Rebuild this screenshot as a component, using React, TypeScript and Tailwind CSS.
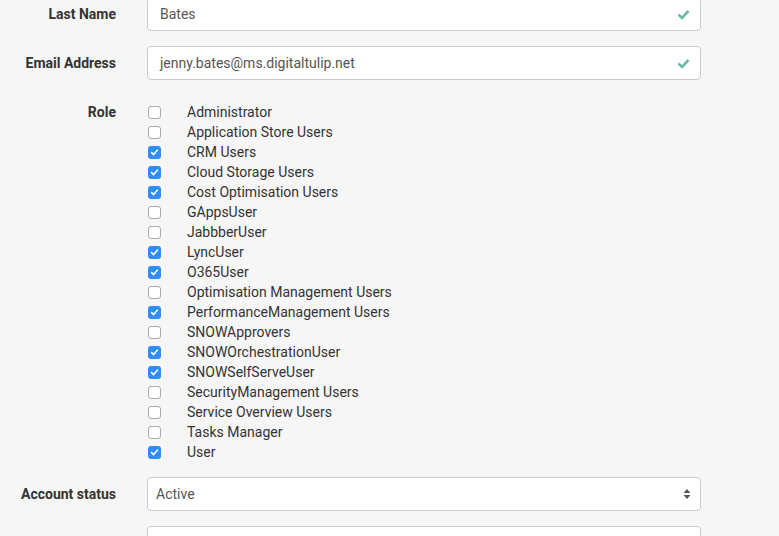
import React from "react";

const roles: [string, boolean][] = [
  ["Administrator", false],
  ["Application Store Users", false],
  ["CRM Users", true],
  ["Cloud Storage Users", true],
  ["Cost Optimisation Users", true],
  ["GAppsUser", false],
  ["JabbberUser", false],
  ["LyncUser", true],
  ["O365User", true],
  ["Optimisation Management Users", false],
  ["PerformanceManagement Users", true],
  ["SNOWApprovers", false],
  ["SNOWOrchestrationUser", true],
  ["SNOWSelfServeUser", true],
  ["SecurityManagement Users", false],
  ["Service Overview Users", false],
  ["Tasks Manager", false],
  ["User", true],
];

function Check() {
  return (
    <svg width="13" height="11" viewBox="0 0 13 11" className="shrink-0">
      <path d="M1.5 5.5 L5 9 L11.5 2" fill="none" stroke="#6cb8a2" strokeWidth="2.6" strokeLinecap="butt" strokeLinejoin="miter" />
    </svg>
  );
}

function Box({ checked }: { checked: boolean }) {
  if (checked) {
    return (
      <div className="w-[13px] h-[13px] rounded-[3px] bg-[#2f8ef5] flex items-center justify-center shrink-0">
        <svg width="9" height="9" viewBox="0 0 9 9">
          <path d="M1.6 4.6 L3.6 6.6 L7.4 2.2" fill="none" stroke="#ffffff" strokeWidth="1.6" strokeLinecap="round" strokeLinejoin="round" />
        </svg>
      </div>
    );
  }
  return <div className="w-[13px] h-[13px] rounded-[3px] bg-white border border-[#a9a9a9] shrink-0" />;
}

function Label({ children }: { children: React.ReactNode }) {
  return (
    <div className="w-[132px] pr-[16px] pt-[7px] text-right font-bold text-[14px] leading-[20px] text-[#333333] shrink-0">
      {children}
    </div>
  );
}

export default function App() {
  return (
    <div
      className="w-[779px] h-[536px] overflow-hidden bg-[#f6f6f6] text-[14px]"
      style={{ fontFamily: "Roboto, 'Noto Sans', sans-serif" }}
    >
      <div className="mt-[-3px] flex flex-col">
        <div className="flex mb-[15px]">
          <Label>Last Name</Label>
          <div className="ml-[15px] w-[554px] h-[34px] bg-white border border-[#cccccc] rounded-[4px] flex items-center pl-[12px] pr-[10px] text-[#555555]">
            <span className="flex-1">Bates</span>
            <Check />
          </div>
        </div>
        <div className="flex mb-[15px]">
          <Label>Email Address</Label>
          <div className="ml-[15px] w-[554px] h-[34px] bg-white border border-[#cccccc] rounded-[4px] flex items-center pl-[12px] pr-[10px] text-[#555555]">
            <span className="flex-1">jenny.bates@ms.digitaltulip.net</span>
            <Check />
          </div>
        </div>
        <div className="flex mb-[15px]">
          <Label>Role</Label>
          <div className="ml-[15px] pt-[7px] flex flex-col">
            {roles.map(([name, checked]) => (
              <div key={name} className="flex items-center h-[20px]">
                <div className="w-[40px] flex items-center pl-[1px]">
                  <Box checked={checked} />
                </div>
                <span className="text-[#333333] leading-[20px]">{name}</span>
              </div>
            ))}
          </div>
        </div>
        <div className="flex mb-[15px]">
          <Label>Account status</Label>
          <div className="ml-[15px] w-[554px] h-[34px] bg-white border border-[#cccccc] rounded-[4px] flex items-center pl-[8px] pr-[9px] text-[#555555]">
            <span className="flex-1">Active</span>
            <svg width="8" height="12" viewBox="0 0 8 12">
              <path d="M4 1 L7.5 5 L0.5 5 Z" fill="#555555" />
              <path d="M4 11 L7.5 7 L0.5 7 Z" fill="#555555" />
            </svg>
          </div>
        </div>
        <div className="flex">
          <Label>&nbsp;</Label>
          <div className="ml-[15px] w-[554px] h-[34px] bg-white border border-[#cccccc] rounded-[4px]" />
        </div>
      </div>
    </div>
  );
}
